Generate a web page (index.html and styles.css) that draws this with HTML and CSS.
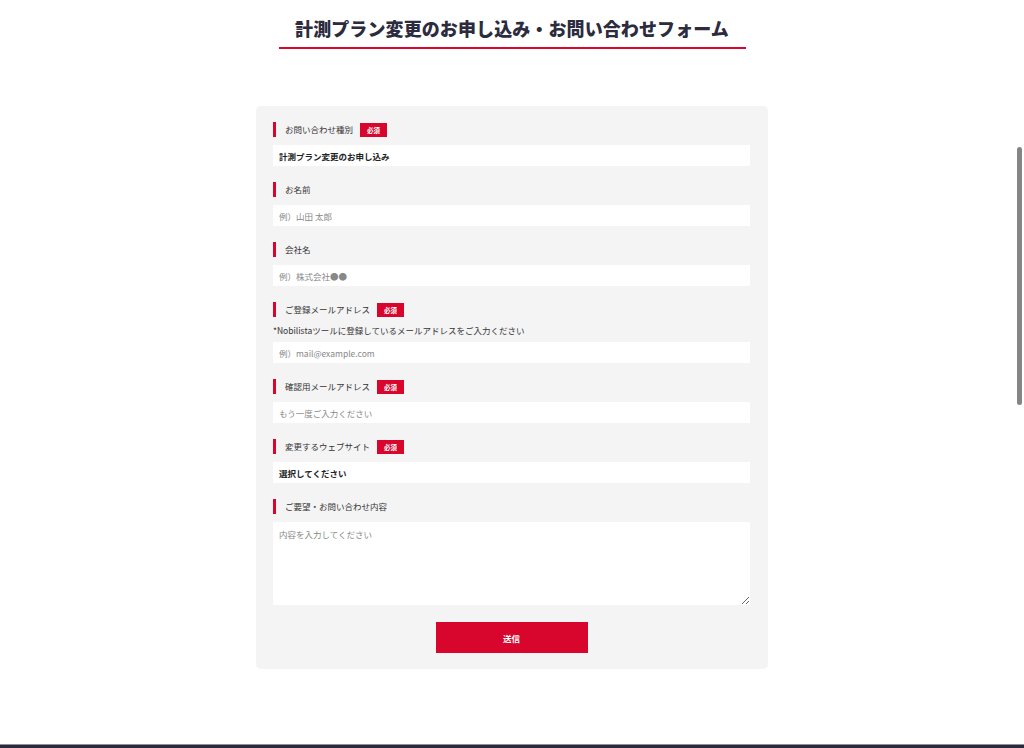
FILE: index.html
```html
<!DOCTYPE html>
<html lang="ja">
<head>
<meta charset="utf-8">
<title>計測プラン変更のお申し込み・お問い合わせフォーム</title>
<link rel="stylesheet" href="styles.css">
</head>
<body>
<main class="page">
  <header class="head">
    <h1 class="title">計測プラン変更のお申し込み・お問い合わせフォーム</h1>
  </header>
  <form class="card">
    <div class="field">
      <div class="label"><span class="label-text">お問い合わせ種別</span><span class="req">必須</span></div>
      <select class="control select"><option>計測プラン変更のお申し込み</option></select>
    </div>
    <div class="field">
      <div class="label"><span class="label-text">お名前</span></div>
      <input class="control" type="text" placeholder="例）山田 太郎">
    </div>
    <div class="field">
      <div class="label"><span class="label-text">会社名</span></div>
      <input class="control" type="text" placeholder="例）株式会社●●">
    </div>
    <div class="field">
      <div class="label"><span class="label-text">ご登録メールアドレス</span><span class="req">必須</span></div>
      <p class="note">*Nobilistaツールに登録しているメールアドレスをご入力ください</p>
      <input class="control" type="email" placeholder="例）mail@example.com">
    </div>
    <div class="field">
      <div class="label"><span class="label-text">確認用メールアドレス</span><span class="req">必須</span></div>
      <input class="control" type="email" placeholder="もう一度ご入力ください">
    </div>
    <div class="field">
      <div class="label"><span class="label-text">変更するウェブサイト</span><span class="req">必須</span></div>
      <select class="control select"><option>選択してください</option></select>
    </div>
    <div class="field">
      <div class="label"><span class="label-text">ご要望・お問い合わせ内容</span></div>
      <textarea class="control area" placeholder="内容を入力してください"></textarea>
    </div>
    <div class="actions">
      <button class="submit" type="button">送信</button>
    </div>
  </form>
</main>
<footer class="foot"></footer>
<div class="scroll-thumb"></div>
</body>
</html>
```
FILE: styles.css
```css
html, body {
  margin: 0;
  padding: 0;
  height: 748px;
  overflow: hidden;
  background: #fff;
}
body {
  font-family: "Noto Sans CJK JP", "Noto Sans", "Liberation Sans", sans-serif;
  color: #333;
  display: flex;
  flex-direction: column;
}
.page {
  flex: 1;
  display: flex;
  flex-direction: column;
  align-items: center;
}
.head {
  padding-top: 16px;
}
.title {
  margin: 0;
  width: 467px;
  text-align: center;
  font-size: 18px;
  line-height: 24px;
  font-weight: 900;
  color: #2c2c3e;
  padding-bottom: 7px;
  border-bottom: 2px solid #d8062c;
  letter-spacing: 0.1px;
}
.card {
  margin-top: 57px;
  width: 477px;
  padding: 16px 18px 16px 17px;
  background: #f4f4f4;
  border-radius: 5px;
  display: flex;
  flex-direction: column;
  gap: 16px;
}
.field {
  display: flex;
  flex-direction: column;
}
.label {
  display: flex;
  align-items: center;
  height: 15px;
  border-left: 3px solid #d8062c;
  padding-left: 9px;
  margin-bottom: 8px;
}
.label-text {
  font-size: 8.5px;
  line-height: 15px;
  color: #333;
}
.req {
  margin-left: 7px;
  background: #d8062c;
  color: #fff;
  font-size: 6.5px;
  font-weight: 700;
  height: 14px;
  line-height: 14px;
  width: 27px;
  text-align: center;
}
.note {
  margin: -1px 0 6px 0;
  font-size: 8.5px;
  line-height: 12px;
  color: #333;
}
.control {
  box-sizing: border-box;
  width: 477px;
  height: 21px;
  border: none;
  outline: none;
  background: #fff;
  padding: 0 6px;
  margin: 0;
  font-family: inherit;
  font-size: 8.5px;
  color: #222;
  border-radius: 0;
}
.control::placeholder {
  color: #888;
}
.select {
  appearance: none;
  -webkit-appearance: none;
  font-weight: 700;
  color: #222;
}
.area {
  height: 83px;
  padding: 6px 6px;
  line-height: 13px;
  resize: both;
  display: block;
}
.actions {
  display: flex;
  justify-content: center;
  padding-top: 1px;
}
.submit {
  width: 152px;
  height: 31px;
  border: none;
  background: #d8062c;
  color: #fff;
  font-family: inherit;
  font-size: 8.5px;
  font-weight: 700;
  cursor: pointer;
}
.foot {
  height: 3px;
  background: #2b2b3b;
  border-top: 1px solid #8e8e96;
}
.scroll-thumb {
  position: fixed;
  top: 147px;
  right: 2px;
  width: 5px;
  height: 258px;
  background: #858585;
  border-radius: 3px;
}
```
